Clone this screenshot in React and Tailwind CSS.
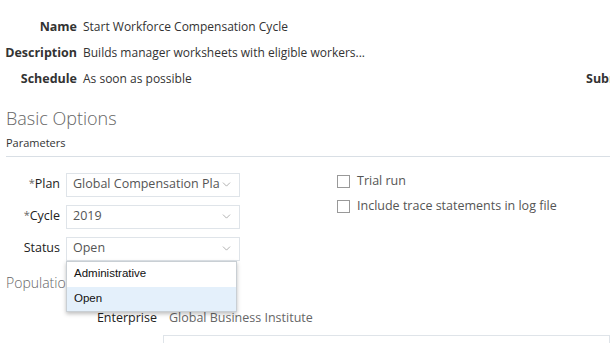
import { ChevronDown } from "lucide-react";

const font = { fontFamily: '"Open Sans", "Noto Sans", sans-serif' };

function InfoRow({ label, value }) {
  return (
    <div className="flex items-center h-[26px]">
      <div className="w-[77px] text-right font-bold text-[#333] text-[12.5px] whitespace-nowrap">{label}</div>
      <div className="pl-[6px] text-[#333] text-[12px] whitespace-nowrap">{value}</div>
    </div>
  );
}

function Select({ value }) {
  return (
    <div className="w-[174px] h-[24px] border border-[#dfe4e9] bg-white flex items-center justify-between pl-[6px] pr-[6px]">
      <span className="text-[#555] text-[12.5px] whitespace-nowrap overflow-hidden">{value}</span>
      <ChevronDown size={13} strokeWidth={1.2} className="text-[#888] shrink-0" />
    </div>
  );
}

function Field({ label, required, value, children }) {
  return (
    <div className="flex items-center h-[32px]">
      <div className="w-[60px] text-right text-[12.5px] text-[#222] whitespace-nowrap">
        {required && <span className="text-[#666] text-[11px] align-top">*</span>}
        {label}
      </div>
      <div className="pl-[6px] relative">
        <Select value={value} />
        {children}
      </div>
    </div>
  );
}

function Check({ label }) {
  return (
    <div className="flex items-center h-[25px]">
      <div className="w-[13px] h-[13px] border border-[#999] bg-white" />
      <span className="ml-[7px] text-[12.5px] text-[#555]">{label}</span>
    </div>
  );
}

export default function App() {
  return (
    <div className="w-[610px] h-[343px] overflow-hidden bg-white relative" style={font}>
      <div className="pt-[14px] flex">
        <div>
          <InfoRow label="Name" value="Start Workforce Compensation Cycle" />
          <InfoRow label="Description" value="Builds manager worksheets with eligible workers..." />
          <InfoRow label="Schedule" value="As soon as possible" />
        </div>
        <div className="ml-auto pt-[56px] pl-[1px] font-bold text-[#333] text-[12.5px] w-[25px] overflow-hidden whitespace-nowrap">Submit</div>
      </div>

      <div className="pl-[6px] mt-[15px]">
        <div className="text-[18px] font-light text-[#666] leading-[22px]">Basic Options</div>
        <div className="text-[11px] text-[#333] mt-[6px] pb-[4px] border-b border-[#d9dfe5]">Parameters</div>
      </div>

      <div className="flex mt-[12px]">
        <div>
          <Field label="Plan" required value="Global Compensation Pla" />
          <Field label="Cycle" required value="2019" />
          <Field label="Status" value="Open">
            <div
              className="absolute left-[6px] top-[24px] w-[171px] bg-white border border-[#c9cfd4] shadow-[0_2px_4px_rgba(0,0,0,0.25)] z-10"
              style={{ fontFamily: '"Liberation Sans", Arial, sans-serif' }}
            >
              <div className="h-[25px] flex items-center pl-[7px] text-[11.5px] text-[#111]">Administrative</div>
              <div className="h-[24px] flex items-center pl-[7px] text-[11.5px] text-[#111] bg-[#e4f0fb]">Open</div>
            </div>
          </Field>
        </div>
        <div className="ml-[97px]">
          <Check label="Trial run" />
          <Check label="Include trace statements in log file" />
        </div>
      </div>

      <div className="pl-[6px] mt-[7px] text-[14px] text-[#666] font-light">Population</div>
      <div className="flex items-center mt-[16px]">
        <div className="w-[157px] text-right text-[12.5px] text-[#222]">Enterprise</div>
        <div className="pl-[12px] text-[12.5px] text-[#666]">Global Business Institute</div>
      </div>
      <div className="ml-[163px] mt-[8px] h-[30px] border border-[#dfe4e9]" />
    </div>
  );
}
